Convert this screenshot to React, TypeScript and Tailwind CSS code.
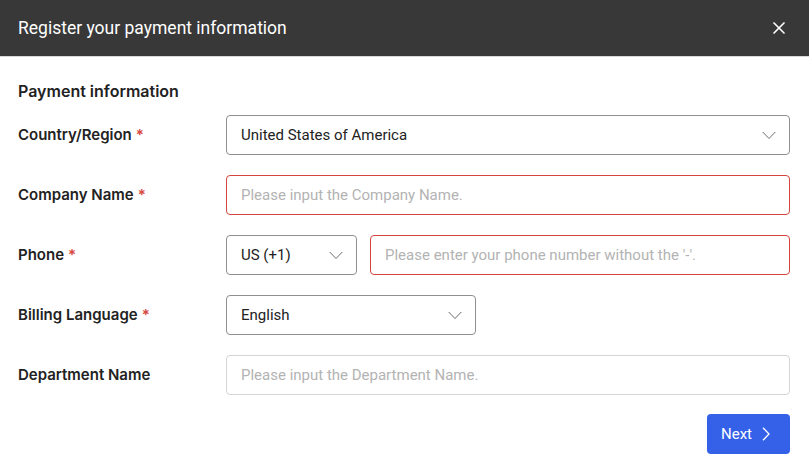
import { X } from "lucide-react";

const label = "text-[15px] font-semibold text-[#222] font-['Inter',sans-serif]";

function Req() {
  return <span className="ml-1 text-[#d6453d]">*</span>;
}

function Chevron() {
  return (
    <svg width="14" height="9" viewBox="0 0 14 9" fill="none" className="text-[#6b6b6b]">
      <polyline points="0.7,1 7,7.5 13.3,1" stroke="currentColor" strokeWidth="1" />
    </svg>
  );
}

function Select({ value, width }: { value: string; width: string }) {
  return (
    <div
      className={`${width} h-10 flex items-center justify-between rounded-[4px] border border-[#8f8f8f] pl-[14px] pr-[13px] text-[15px] text-[#222]`}
    >
      <span>{value}</span>
      <Chevron />
    </div>
  );
}

function Input({ placeholder, error }: { placeholder: string; error?: boolean }) {
  return (
    <div
      className={`flex-1 h-10 flex items-center rounded-[4px] border pl-[14px] text-[15px] text-[#b3b3b3] ${
        error ? "border-[#d6453d]" : "border-[#d4d4d4]"
      }`}
    >
      {placeholder}
    </div>
  );
}

function Row({ name, req, children }: { name: string; req?: boolean; children: React.ReactNode }) {
  return (
    <div className="flex items-center h-10">
      <div className={`w-[208px] shrink-0 ${label}`}>
        {name}
        {req && <Req />}
      </div>
      <div className="flex-1 flex items-center gap-[13px]">{children}</div>
    </div>
  );
}

export default function App() {
  return (
    <div className="w-[809px] h-[474px] bg-white font-['Roboto',sans-serif] overflow-hidden">
      <div className="h-[57px] bg-[#383838] border-b border-[#d8d8d8] flex items-center justify-between pl-[18px] pr-[20px]">
        <span className="text-white text-[17.5px]">Register your payment information</span>
        <X className="w-[20px] h-[20px] text-white" strokeWidth={2} />
      </div>
      <div className="px-[18px] pr-[19px] pt-[22px]">
        <div className="text-[16px] font-semibold text-[#222] font-['Inter',sans-serif] leading-6">
          Payment information
        </div>
        <div className="mt-[12px] flex flex-col gap-5">
          <Row name="Country/Region" req>
            <Select value="United States of America" width="flex-1" />
          </Row>
          <Row name="Company Name" req>
            <Input placeholder="Please input the Company Name." error />
          </Row>
          <Row name="Phone" req>
            <Select value="US (+1)" width="w-[131px]" />
            <Input placeholder="Please enter your phone number without the '-'." error />
          </Row>
          <Row name="Billing Language" req>
            <Select value="English" width="w-[250px]" />
          </Row>
          <Row name="Department Name">
            <Input placeholder="Please input the Department Name." />
          </Row>
        </div>
        <div className="flex justify-end mt-[19px]">
          <button className="h-10 w-[83px] rounded-[4px] bg-[#3461e8] text-white text-[15px] flex items-center gap-[10px] pl-[14px]">
            Next
            <svg width="8" height="14" viewBox="0 0 8 14" fill="none">
              <polyline points="1,0.7 7,7 1,13.3" stroke="currentColor" strokeWidth="1.3" />
            </svg>
          </button>
        </div>
      </div>
    </div>
  );
}
